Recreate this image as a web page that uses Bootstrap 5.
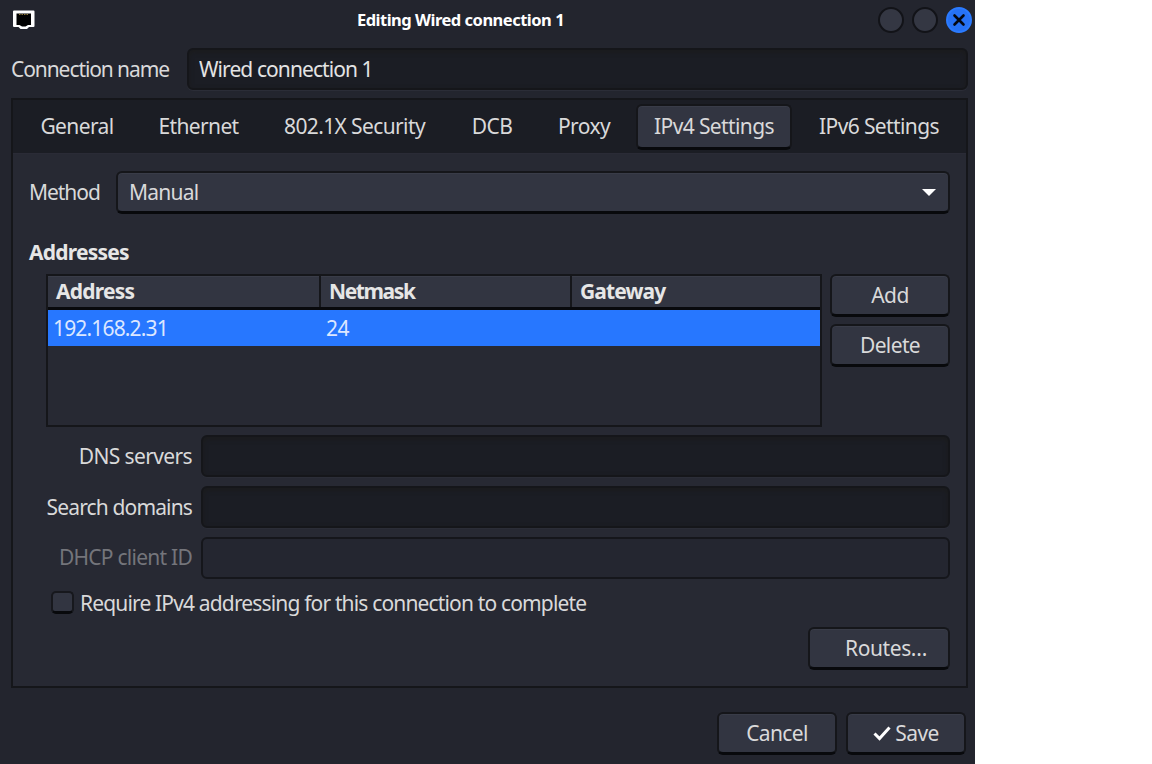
<!DOCTYPE html>
<html lang="en">
<head>
<meta charset="utf-8">
<title>Editing Wired connection 1</title>
<link href="https://cdn.jsdelivr.net/npm/bootstrap@5.3.0/dist/css/bootstrap.min.css" rel="stylesheet">
<style>
body{background:#fff;font-family:"Noto Sans","Open Sans",sans-serif;font-size:21px;line-height:28px;color:#d9d9da;overflow:hidden}
.window{width:975px;height:764px;background:#23252e;letter-spacing:-.62px;white-space:nowrap}
.titlebar{height:39px;padding:0 3px 0 13px}
.window-title{font-size:16.5px;letter-spacing:-.5px;color:#fff;margin-left:8px}
.window-btn{width:26px;height:26px;border-radius:50%;background:#343743;border:2px solid #121318}
.window-btn.close-btn{background:#2672f5;border-color:#2b7bff}
.name-row{height:42px;margin:9px 7px 8px 11px}
.name-row label{width:176px;letter-spacing:-1.08px;padding-bottom:1px}
.entry{height:42px;padding:0 10px 1px;background:#1b1d24;border:2px solid #15161a;border-radius:6px;color:#e3e3e3;box-shadow:inset 0 2px 5px #1b1b1c,0 1px #2b2d37;font-size:inherit;letter-spacing:-.92px}
.entry:disabled{background:#242630;border-color:#15161b;box-shadow:none}
.panel{width:957px;height:590px;margin-left:11px;border:2px solid #15161a;background:#272933}
.tabs{height:54px;background:#1b1d24;padding:4px 9px 4px 12px;border-bottom:1px solid #2a2b36}
.tabs .nav-link{padding:0 0 2px;height:46px;color:#d9d9da;border:0;display:flex;align-items:center;justify-content:center}
.tabs .nav-link.active,.raised{background:#323541;border:2px solid #15161a;border-bottom:3px solid #08090c;border-radius:6px;box-shadow:inset 0 1px #393c48;color:#d9d9da}
.tabs .nav-link.active{background:#323541;color:#d9d9da;padding-bottom:1px}
.t1{width:104px}.t2{width:139px}.t3{width:173px}.t4{width:102px}.t5{width:82px}.t6{width:156px;margin-left:11px}.t7{width:144px;margin-left:15px}
.raised{height:43px;padding:0;font-size:inherit;line-height:28px;letter-spacing:inherit}
.raised:hover{background:#323541;color:#d9d9da}
.content{padding:17px 16px 0}
.method-row label{width:87px;letter-spacing:-1.05px;padding-bottom:1px}
.manual-text{margin-left:3px;letter-spacing:-.75px}
.heading{font-size:21px;margin:24px 0 8px;line-height:28px;color:#e6e6e6;letter-spacing:-.78px}
.address-row{margin-left:17px;gap:8px}
.address-table{width:776px;height:153px;border:2px solid #15161a}
.address-head{height:34px;background:#323541;border-bottom:3px solid #08090c;box-shadow:inset 0 1px #393c48;color:#e6e6e6}
.address-head div{height:31px;padding-left:8px;line-height:31px;border-right:2px solid #15161a;letter-spacing:-.75px}
.address-head .col-netmask{letter-spacing:-1.4px}
.address-head div:last-child{border:0;letter-spacing:-.9px}
.col-address{width:273px}.col-netmask{width:251px}
.address-item{height:36px;line-height:36px;background:#2777ff;color:#dce7ff;padding-left:5px}
.address-item .col-address{letter-spacing:-.84px}
.side{width:120px;gap:7px}
.side .raised{padding-bottom:1px}
.fields{margin-top:8px;gap:8px;padding-left:17px}
.fields label{width:146px;text-align:right;margin-right:9px;padding-bottom:1px}
.fields .search-label{letter-spacing:-.86px}
.fields .disabled-label{color:#74757b;letter-spacing:-.75px}
.field-row{height:42.7px}
.checkline{margin:1px 0 0 22px;height:44px;letter-spacing:-.84px}
.check-text{padding-top:2px}
.box{width:23px;height:23px;border:2px solid #17181d;border-bottom:3px solid #08090c;border-radius:5px;background:#323541;margin-right:6px}
.routes-row{margin-top:3px}
.w-routes{width:142px;padding-left:14px;letter-spacing:-.4px}
.actions{margin:24px 9px 0;gap:9px}
.actions .raised{width:120px}
</style>
</head>
<body>
<main class="window d-flex flex-column">
  <header class="titlebar d-flex align-items-center">
    <svg width="22" height="20" viewBox="0 0 22 20"><path d="M0 1.500Q0 .5 1 .5h19.500q1 0 1 1V16q0 1-1 1h-4.500l-2 2H7.500l-2-2H1q-1 0-1-1z" fill="#fff"/><path d="M3.500 3.500h14.500V15h-3l-2.500 1.500H9L6.500 15h-3z" fill="#000"/><path d="M6 4.500h10" stroke="#8d7638" stroke-dasharray="1.500 1"/></svg>
    <strong class="window-title flex-fill text-center">Editing Wired connection 1</strong>
    <div class="d-flex gap-2">
      <span class="window-btn"></span><span class="window-btn"></span>
      <span class="window-btn close-btn d-flex align-items-center justify-content-center"><svg width="14" height="14" viewBox="0 0 14 14"><path d="M2.500 2.500l9 9m0-9l-9 9" stroke="#050810" stroke-width="2.600" stroke-linecap="round"/></svg></span>
    </div>
  </header>
  <div class="name-row d-flex align-items-center"><label for="name">Connection name</label><input id="name" class="entry flex-fill" value="Wired connection 1"></div>
  <section class="panel">
    <nav class="tabs nav flex-nowrap">
      <a class="nav-link t1">General</a><a class="nav-link t2">Ethernet</a><a class="nav-link t3">802.1X Security</a><a class="nav-link t4">DCB</a><a class="nav-link t5">Proxy</a><a class="nav-link active t6">IPv4 Settings</a><a class="nav-link t7">IPv6 Settings</a>
    </nav>
    <div class="content">
      <div class="method-row d-flex align-items-center"><label>Method</label>
        <button class="btn raised flex-fill d-flex align-items-center justify-content-between ps-2 pe-2"><span class="manual-text">Manual</span><svg width="22" height="10" viewBox="0 0 22 10"><path d="M4 2h14l-7 7z" fill="#fff"/></svg></button>
      </div>
      <h2 class="heading fw-bold">Addresses</h2>
      <div class="address-row d-flex">
        <div class="address-table">
          <div class="address-head d-flex fw-bold"><div class="col-address">Address</div><div class="col-netmask">Netmask</div><div>Gateway</div></div>
          <div class="address-item d-flex"><div class="col-address">192.168.2.31</div><div>24</div></div>
        </div>
        <div class="side d-flex flex-column"><button class="btn raised">Add</button><button class="btn raised">Delete</button></div>
      </div>
      <div class="fields d-flex flex-column">
        <div class="field-row d-flex align-items-center"><label>DNS servers</label><input class="entry flex-fill"></div>
        <div class="field-row d-flex align-items-center"><label class="search-label">Search domains</label><input class="entry flex-fill"></div>
        <div class="field-row d-flex align-items-center"><label class="disabled-label">DHCP client ID</label><input class="entry flex-fill" disabled></div>
      </div>
      <div class="checkline d-flex align-items-center"><span class="box"></span><span class="check-text">Require IPv4 addressing for this connection to complete</span></div>
      <div class="routes-row d-flex justify-content-end"><button class="btn raised w-routes">Routes…</button></div>
    </div>
  </section>
  <footer class="actions d-flex justify-content-end">
    <button class="btn raised">Cancel</button>
    <button class="btn raised d-flex align-items-center justify-content-center"><svg width="18" height="16" viewBox="0 0 18 16"><path d="M1.500 8.500l5 5 10-11" fill="none" stroke="#fff" stroke-width="3"/></svg><span class="ms-1">Save</span></button>
  </footer>
</main>
<script src="https://cdn.jsdelivr.net/npm/bootstrap@5.3.0/dist/js/bootstrap.bundle.min.js"></script>
</body>
</html>
